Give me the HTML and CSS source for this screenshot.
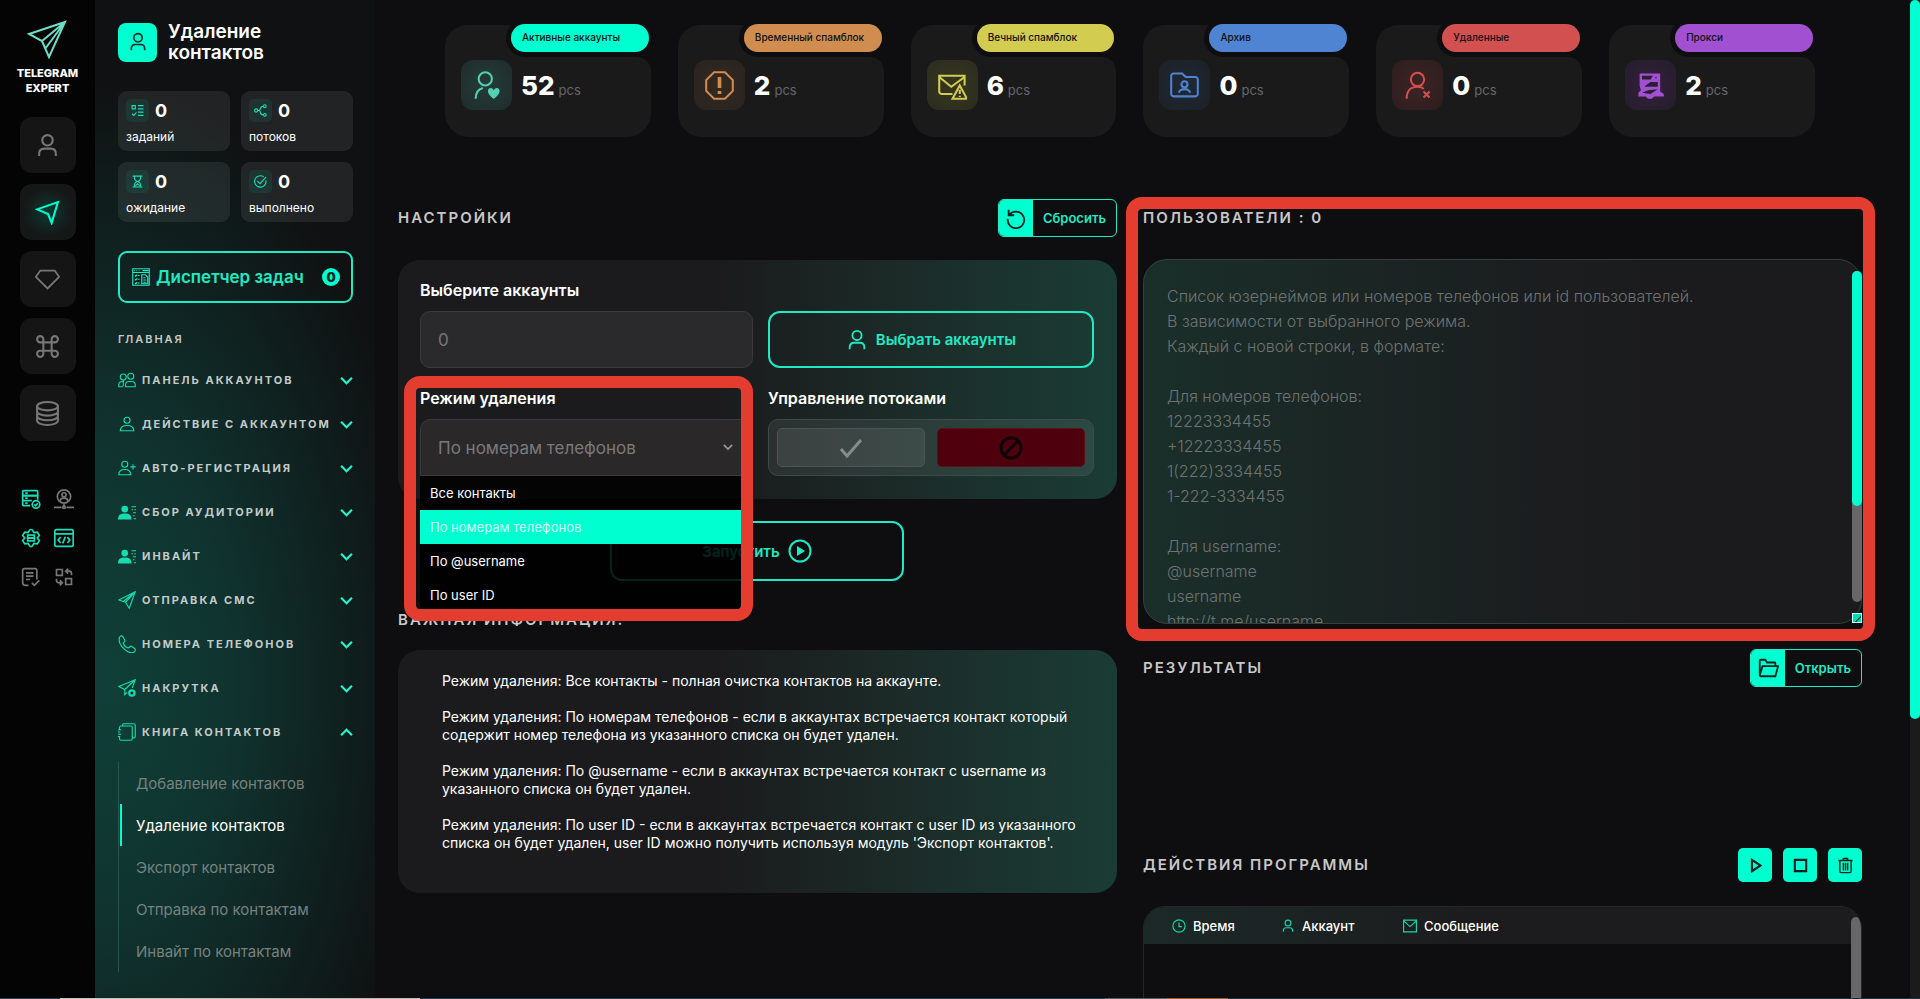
FILE: index.html
```html
<!DOCTYPE html>
<html lang="ru">
<head>
    <meta charset="UTF-8">
    <meta name="viewport" content="width=device-width, initial-scale=1.0">
    <title>Telegram Expert - Удаление контактов</title>
    <link rel="stylesheet" href="styles.css">
</head>
<body>
    <!-- Icon sprite -->
    <svg class="sprite" aria-hidden="true">
        <symbol id="i-user" viewBox="0 0 24 24"><circle cx="12" cy="7" r="5"/><path d="M4 22v-2c0-3 2-5 5-5h6c3 0 5 2 5 5v2"/></symbol>
        <symbol id="i-logo" viewBox="0 0 40 40"><path d="M2 14 38 2 22 37 15 21Z M15 21 38 2 18 29"/></symbol>
        <symbol id="i-nav" viewBox="0 0 24 24"><path d="M2 9 22 2 16 22 12.500 13.500Z"/></symbol>
        <symbol id="i-diamond" viewBox="0 0 28 24"><path d="M6 2h16l5 7-13 13L1 9Z"/></symbol>
        <symbol id="i-command" viewBox="0 0 24 24"><path d="M8 8h8v8H8Z M8 8H5a3 3 0 1 1 3-3Z M16 8V5a3 3 0 1 1 3 3Z M16 16h3a3 3 0 1 1-3 3Z M8 16v3a3 3 0 1 1-3-3Z"/></symbol>
        <symbol id="i-db" viewBox="0 0 24 24"><ellipse cx="12" cy="5" rx="10" ry="4"/><path d="M2 5v14c0 2 4 4 10 4s10-2 10-4V5M2 10c0 2 4 4 10 4s10-2 10-4M2 14.500c0 2 4 4 10 4s10-2 10-4"/></symbol>
        <symbol id="i-server" viewBox="0 0 24 24"><rect x="2" y="2" width="18" height="6" rx="1"/><path d="M11 20H3a1 1 0 0 1-1-1V8h18v5M2 14h11M5 5h3M5 11h3M5 17h3"/><circle cx="18" cy="18.500" r="4.500"/><path d="m16 18.500 1.500 1.500 2.500-3"/></symbol>
        <symbol id="i-netuser" viewBox="0 0 24 24"><circle cx="12" cy="9" r="8"/><circle cx="12" cy="7" r="2.500"/><path d="M7.500 15v-1c0-2 2-3 4.500-3s4.500 1 4.500 3v1M12 18v3M0 22h9M15 22h9"/><circle cx="12" cy="22" r="1.500"/></symbol>
        <symbol id="i-gear" viewBox="0 0 24 24"><path d="M9.500 4c1-3 4-3 5 0l1 1.500 4-.5 2.500 4-2.500 3 2.500 3-2.500 4-4-.5-1 1.500c-1 3-4 3-5 0l-1-1.500-4 .5L2 15l2.500-3L2 9l2.500-4 4 .5Z"/><rect x="8" y="8.500" width="8" height="3.500"/><rect x="8" y="12" width="8" height="3.500"/></symbol>
        <symbol id="i-code" viewBox="0 0 24 24"><rect x="1" y="2" width="22" height="20" rx="2"/><path d="M1 7h22M8 11l-3 3.500L8 18M16 11l3 3.500-3 3.500M13.500 10.500l-3 8"/></symbol>
        <symbol id="i-note" viewBox="0 0 24 24"><path d="M9 22H5c-2 0-3-1-3-3V4c0-1 1-2 2-2h13c1 0 2 1 2 2v11M6 7h9M6 11h9M6 15h5M13 19l3 3 6-6"/></symbol>
        <symbol id="i-swap" viewBox="0 0 24 24"><path d="M3 3h7v7H3ZM14 14h7v7h-7ZM14 5h4c2 0 3 1 3 3v2M17 2l-3 3 3 3M3 14v2c0 2 1 3 3 3h4M7 16l3 3-3 3"/></symbol>
        <symbol id="i-list" viewBox="0 0 24 24"><path d="M2 3h6v6H2ZM2 18l3 3 5-5M13 3h10M13 9h10M13 15h10M13 21h10"/></symbol>
        <symbol id="i-share" viewBox="0 0 24 24"><circle cx="4" cy="12" r="3"/><circle cx="20" cy="4" r="2.500"/><circle cx="20" cy="20" r="2.500"/><path d="M7 12h4M17 4c-8 0-3 8-8 8 5 0 0 8 8 8"/></symbol>
        <symbol id="i-glass" viewBox="0 0 24 24"><path d="M3 2h18M3 22h18M6 2c0 6 1 7 5 10-4 3-5 4-5 10M18 2c0 6-1 7-5 10 4 3 5 4 5 10M8 20l4-4 4 4"/></symbol>
        <symbol id="i-done" viewBox="0 0 24 24"><path d="M22 10a10.500 10.500 0 1 1-4-6.500M6 11l5 5L22 4"/></symbol>
        <symbol id="i-board" viewBox="0 0 24 24"><path d="M1 1h22v22H1ZM1 6h22M3 3.500h1M6 3.500h1M9 3.500h1M14 3.500h8M4 10l1 1 2-2M8 10h2M4 15l1 1 2-2M8 15h2M4 20l1 1 2-2M8 20h2M13 9h5l3 3v9h-8ZM15 13h3M15 16h4M15 19h4"/></symbol>
        <symbol id="i-users" viewBox="0 0 24 24"><circle cx="7" cy="8" r="4"/><circle cx="17" cy="7" r="4"/><path d="M7 21H1v-2c0-3 2-5 5-5h2M10 21v-2c0-3 2-5 5-5h3c3 0 5 2 5 5v2ZM7 12v8"/></symbol>
        <symbol id="i-person" viewBox="0 0 24 24"><circle cx="12" cy="7" r="4"/><path d="M3 21c0-5 3-7 9-7s9 2 9 7Z"/></symbol>
        <symbol id="i-useradd" viewBox="0 0 24 24"><circle cx="9" cy="7" r="4"/><path d="M1 21c0-5 3-7 8-7s8 2 8 7ZM20 7v7M16.500 10.500h7"/></symbol>
        <symbol id="i-userlist" viewBox="0 0 24 24"><g class="solid"><circle cx="9" cy="8" r="4.500"/><path d="M0 22c0-6 3-8 9-8s9 2 9 8Z"/></g><path d="M18 5h6M18 9h2M22 9h2M20 13h4M20 17h2M21 21h3"/></symbol>
        <symbol id="i-plane" viewBox="0 0 24 24"><path d="M1 12 23 1 15 23 10 15ZM10 15 23 1 7 14M10 15l5 8"/></symbol>
        <symbol id="i-planeplus" viewBox="0 0 24 24"><path d="M9 14 1 10 23 1 19 12M9 14 23 1M9 14v7l3-3"/><circle cx="18.500" cy="18.500" r="5" class="solid"/><circle cx="18.500" cy="18.500" r="2" class="hole"/></symbol>
        <symbol id="i-phone" viewBox="0 0 24 24"><path d="M2 3c2-3 4-2 5 0l2 4c1 2-2 3-2 4 1 3 3 5 6 6 2 1 3-3 5-2l4 3c2 1 1 4-1 5-7 3-22-9-19-20Z"/></symbol>
        <symbol id="i-book" viewBox="0 0 24 24"><path d="M4 4h13c1 0 2 1 2 2v15c0 1-1 2-2 2H4c-1 0-2-1-2-2v-3M2 9V6c0-1 1-2 2-2M6 4V3c0-1 1-2 2-2h13c1 0 2 1 2 2v15c0 2-2 2-4 2M0 9h4M0 12h3M0 15h4M0 18h3"/></symbol>
        <symbol id="i-down" viewBox="0 0 12 8"><path d="m1 1.500 5 5 5-5"/></symbol>
        <symbol id="i-heart" viewBox="0 0 24 24"><circle cx="11" cy="6.500" r="5.500"/><path d="M3 23c0-5 2-8 6-9"/><path class="solid" d="M18 23c-7-5-5-9-2.500-9 1.500 0 2 1 2.500 2 .5-1 1-2 2.500-2 2.500 0 4.500 4-2.500 9Z"/></symbol>
        <symbol id="i-warn" viewBox="0 0 24 24"><path d="M7.500 1h9L23 7.500v9L16.500 23h-9L1 16.500v-9Z"/><path class="fat" d="M12 5v9M12 16.500v2.500"/></symbol>
        <symbol id="i-mail" viewBox="0 0 24 24"><path d="M12 19H3c-1 0-2-1-2-2V4h21v8M1 5l10 8L22 5"/><path d="m18 12 6 11H12ZM18 15.500v3.500M18 20.500v1"/></symbol>
        <symbol id="i-folderuser" viewBox="0 0 24 24"><path d="M1 4c0-1 1-2 2-2h7l3 3h8c1 0 2 1 2 2v12c0 1-1 2-2 2H3c-1 0-2-1-2-2Z"/><circle cx="12" cy="11" r="2.500"/><path d="M7.500 18c0-4 9-4 9 0"/></symbol>
        <symbol id="i-userx" viewBox="0 0 24 24"><circle cx="12" cy="7" r="5.500"/><path d="M3 23c0-6 3-10 9-10 2 0 4 0 5 2M17 17l5 5M22 17l-5 5"/></symbol>
        <symbol id="i-proxy" viewBox="0 0 24 24"><path class="solid" d="M3 2h17v15l3 2v2h-8l-2 2h-3l-2-2H2v-3l2-2-1-4Z"/><path class="hole" d="M5 4h9l-2 3H5ZM16 5h1v1h-1ZM8 12l4-3h6v4H7ZM5 18l5-2 8-1-6 4Z"/></symbol>
        <symbol id="i-reset" viewBox="0 0 24 24"><path d="M4 3v6h6M4.500 9a9 9 0 1 1-1.500 4"/></symbol>
        <symbol id="i-folder" viewBox="0 0 24 24"><path d="M3 20V4c0-1 1-1 1-1h5l2 3h8c1 0 1 1 1 1v2M3 20 6 10h17l-3 11H4c-1 0-1-1-1-1Z"/></symbol>
        <symbol id="i-check" viewBox="0 0 24 20"><path d="m2 11 6 7L22 2"/></symbol>
        <symbol id="i-ban" viewBox="0 0 24 24"><circle cx="12" cy="12" r="10"/><path d="M5 19 19 5"/></symbol>
        <symbol id="i-play" viewBox="0 0 24 24"><circle cx="12" cy="12" r="10.500"/><path class="solid" d="m9 7 8 5-8 5Z"/></symbol>
        <symbol id="i-tri" viewBox="0 0 24 24"><path d="m7 4 12 8-12 8Z"/></symbol>
        <symbol id="i-square" viewBox="0 0 24 24"><path d="M4 4h16v16H4Z"/></symbol>
        <symbol id="i-trash" viewBox="0 0 24 24"><path d="M2 5h20M9 5V2h6v3M4 5v15c0 2 1 2 2 2h12c1 0 2 0 2-2V5M9 8v11M12 8v11M15 8v11"/></symbol>
        <symbol id="i-clock" viewBox="0 0 24 24"><circle cx="12" cy="12" r="10.500"/><path d="M12 6v7h5"/></symbol>
        <symbol id="i-letter" viewBox="0 0 24 24"><path d="M1 2h22v20H1ZM2 4l10 9L22 4"/></symbol>
    </svg>

    <div class="app">
        <!-- Left rail -->
        <nav class="rail" aria-label="Разделы">
            <a class="logo" href="#">
                <svg><use href="#i-logo"/></svg>
                <span>TELEGRAM<br>EXPERT</span>
            </a>
            <div class="rail-buttons">
                <button class="rail-btn" aria-label="Аккаунты"><svg><use href="#i-user"/></svg></button>
                <button class="rail-btn active" aria-label="Telegram"><svg><use href="#i-nav"/></svg></button>
                <button class="rail-btn" aria-label="Премиум"><svg><use href="#i-diamond"/></svg></button>
                <button class="rail-btn" aria-label="Команды"><svg><use href="#i-command"/></svg></button>
                <button class="rail-btn" aria-label="База"><svg><use href="#i-db"/></svg></button>
            </div>
            <div class="rail-tools">
                <button class="tool on" aria-label="Серверы"><svg><use href="#i-server"/></svg></button>
                <button class="tool" aria-label="Сеть"><svg><use href="#i-netuser"/></svg></button>
                <button class="tool on" aria-label="Настройки"><svg><use href="#i-gear"/></svg></button>
                <button class="tool on" aria-label="Код"><svg><use href="#i-code"/></svg></button>
                <button class="tool" aria-label="Журнал"><svg><use href="#i-note"/></svg></button>
                <button class="tool" aria-label="Обмен"><svg><use href="#i-swap"/></svg></button>
            </div>
        </nav>

        <!-- Sidebar -->
        <aside class="sidebar">
            <header class="side-head">
                <span class="side-icon"><svg><use href="#i-user"/></svg></span>
                <h1>Удаление<br>контактов</h1>
            </header>
            <div class="counters">
                <div class="counter"><div><svg><use href="#i-list"/></svg><b>0</b></div><span>заданий</span></div>
                <div class="counter"><div><svg><use href="#i-share"/></svg><b>0</b></div><span>потоков</span></div>
                <div class="counter"><div><svg><use href="#i-glass"/></svg><b>0</b></div><span>ожидание</span></div>
                <div class="counter"><div><svg><use href="#i-done"/></svg><b>0</b></div><span>выполнено</span></div>
            </div>
            <button class="task-btn"><svg><use href="#i-board"/></svg><span>Диспетчер задач</span><b>0</b></button>
            <h2>ГЛАВНАЯ</h2>
            <ul class="menu">
                <li><a href="#"><svg><use href="#i-users"/></svg>ПАНЕЛЬ АККАУНТОВ<svg class="chev"><use href="#i-down"/></svg></a></li>
                <li><a href="#"><svg><use href="#i-person"/></svg>ДЕЙСТВИЕ С АККАУНТОМ<svg class="chev"><use href="#i-down"/></svg></a></li>
                <li><a href="#"><svg><use href="#i-useradd"/></svg>АВТО-РЕГИСТРАЦИЯ<svg class="chev"><use href="#i-down"/></svg></a></li>
                <li><a href="#"><svg><use href="#i-userlist"/></svg>СБОР АУДИТОРИИ<svg class="chev"><use href="#i-down"/></svg></a></li>
                <li><a href="#"><svg><use href="#i-userlist"/></svg>ИНВАЙТ<svg class="chev"><use href="#i-down"/></svg></a></li>
                <li><a href="#"><svg><use href="#i-plane"/></svg>ОТПРАВКА СМС<svg class="chev"><use href="#i-down"/></svg></a></li>
                <li><a href="#"><svg><use href="#i-phone"/></svg>НОМЕРА ТЕЛЕФОНОВ<svg class="chev"><use href="#i-down"/></svg></a></li>
                <li><a href="#"><svg><use href="#i-planeplus"/></svg>НАКРУТКА<svg class="chev"><use href="#i-down"/></svg></a></li>
                <li><a href="#"><svg><use href="#i-book"/></svg>КНИГА КОНТАКТОВ<svg class="chev up"><use href="#i-down"/></svg></a></li>
            </ul>
            <ul class="submenu">
                <li><a href="#">Добавление контактов</a></li>
                <li><a href="#" class="current">Удаление контактов</a></li>
                <li><a href="#">Экспорт контактов</a></li>
                <li><a href="#">Отправка по контактам</a></li>
                <li><a href="#">Инвайт по контактам</a></li>
            </ul>
        </aside>

        <main class="main">
            <section class="cards">
                <div class="card mint"><div class="card-top"><i></i><span>Активные аккаунты</span></div><div class="card-body"><div class="card-icon"><svg><use href="#i-heart"/></svg></div><b>52</b><small>pcs</small></div></div>
                <div class="card orange"><div class="card-top"><i></i><span>Временный спамблок</span></div><div class="card-body"><div class="card-icon"><svg><use href="#i-warn"/></svg></div><b>2</b><small>pcs</small></div></div>
                <div class="card yellow"><div class="card-top"><i></i><span>Вечный спамблок</span></div><div class="card-body"><div class="card-icon"><svg><use href="#i-mail"/></svg></div><b>6</b><small>pcs</small></div></div>
                <div class="card blue"><div class="card-top"><i></i><span>Архив</span></div><div class="card-body"><div class="card-icon"><svg><use href="#i-folderuser"/></svg></div><b>0</b><small>pcs</small></div></div>
                <div class="card red"><div class="card-top"><i></i><span>Удаленные</span></div><div class="card-body"><div class="card-icon"><svg><use href="#i-userx"/></svg></div><b>0</b><small>pcs</small></div></div>
                <div class="card purple"><div class="card-top"><i></i><span>Прокси</span></div><div class="card-body"><div class="card-icon"><svg><use href="#i-proxy"/></svg></div><b>2</b><small>pcs</small></div></div>
            </section>

            <div class="columns">
                <section class="col">
                    <div class="title-row">
                        <h2>НАСТРОЙКИ</h2>
                        <button class="split-btn"><span class="split-icon"><svg><use href="#i-reset"/></svg></span><span class="split-text">Сбросить</span></button>
                    </div>
                    <div class="panel settings">
                        <div class="field">
                            <label for="accounts">Выберите аккаунты</label>
                            <input type="text" id="accounts" class="control" placeholder="0">
                        </div>
                        <div class="field end">
                            <button class="outline-btn"><svg><use href="#i-user"/></svg>Выбрать аккаунты</button>
                        </div>
                        <div class="field mode">
                            <label for="mode">Режим удаления</label>
                            <div class="select-wrap">
                                <select id="mode" class="control">
                                    <option>Все контакты</option>
                                    <option selected>По номерам телефонов</option>
                                    <option>По @username</option>
                                    <option>По user ID</option>
                                </select>
                                <svg><use href="#i-down"/></svg>
                            </div>
                            <ul class="options">
                                <li>Все контакты</li>
                                <li class="selected">По номерам телефонов</li>
                                <li>По @username</li>
                                <li>По user ID</li>
                            </ul>
                            <div class="marker"></div>
                        </div>
                        <div class="field">
                            <span class="label">Управление потоками</span>
                            <div class="switch">
                                <button aria-label="Включить"><svg><use href="#i-check"/></svg></button>
                                <button class="off" aria-label="Выключить"><svg><use href="#i-ban"/></svg></button>
                            </div>
                        </div>
                    </div>
                    <button class="outline-btn run">Запустить<svg><use href="#i-play"/></svg></button>
                    <h2 class="info-title">ВАЖНАЯ ИНФОРМАЦИЯ:</h2>
                    <div class="panel info">
                        <p>Режим удаления: Все контакты - полная очистка контактов на аккаунте.</p>
                        <p>Режим удаления: По номерам телефонов - если в аккаунтах встречается контакт который<br>содержит номер телефона из указанного списка он будет удален.</p>
                        <p>Режим удаления: По @username - если в аккаунтах встречается контакт с username из<br>указанного списка он будет удален.</p>
                        <p>Режим удаления: По user ID - если в аккаунтах встречается контакт с user ID из указанного<br>списка он будет удален, user ID можно получить используя модуль 'Экспорт контактов'.</p>
                    </div>
                </section>

                <section class="col">
                    <div class="users">
                        <div class="title-row"><h2><label for="users">ПОЛЬЗОВАТЕЛИ : 0</label></h2></div>
                        <div class="area-wrap">
                            <textarea id="users" placeholder="Список юзернеймов или номеров телефонов или id пользователей.
В зависимости от выбранного режима.
Каждый с новой строки, в формате:

Для номеров телефонов:
12223334455
+12223334455
1(222)3334455
1-222-3334455

Для username:
@username
username
http://t.me/username"></textarea>
                            <div class="area-scroll"><div></div></div>
                            <div class="grip"></div>
                        </div>
                        <div class="marker"></div>
                    </div>
                    <div class="title-row results">
                        <h2>РЕЗУЛЬТАТЫ</h2>
                        <button class="split-btn"><span class="split-icon"><svg><use href="#i-folder"/></svg></span><span class="split-text">Открыть</span></button>
                    </div>
                    <div class="title-row actions">
                        <h2>ДЕЙСТВИЯ ПРОГРАММЫ</h2>
                        <div class="action-btns">
                            <button aria-label="Старт"><svg><use href="#i-tri"/></svg></button>
                            <button aria-label="Стоп"><svg><use href="#i-square"/></svg></button>
                            <button aria-label="Очистить"><svg><use href="#i-trash"/></svg></button>
                        </div>
                    </div>
                    <div class="log">
                        <table>
                            <thead>
                                <tr>
                                    <th><svg><use href="#i-clock"/></svg>Время</th>
                                    <th><svg><use href="#i-user"/></svg>Аккаунт</th>
                                    <th><svg><use href="#i-letter"/></svg>Сообщение</th>
                                </tr>
                            </thead>
                        </table>
                        <div class="log-scroll"></div>
                    </div>
                </section>
            </div>
        </main>
        <div class="page-scroll"><div></div></div>
    </div>
    <div class="bottom-line"></div>
</body>
</html>
```
FILE: styles.css
```css
* {
    box-sizing: border-box;
}
body {
    margin: 0;
    background-color: #0e0d0f;
    color: white;
    font-family: Inter, "Open Sans", sans-serif;
    font-size: 14px;
    overflow: hidden;
}
h1, h2, p, ul {
    margin: 0;
    padding: 0;
}
ul {
    list-style: none;
}
a {
    color: inherit;
    text-decoration: none;
}
button {
    padding: 0;
    border: none;
    background: none;
    color: inherit;
    font-family: inherit;
    cursor: pointer;
}
svg {
    width: 18px;
    height: 18px;
    flex: none;
    fill: none;
    stroke: currentColor;
    stroke-width: 2;
}
.sprite {
    display: none;
}
.solid {
    fill: currentColor;
    stroke: none;
}
.hole {
    fill: #2a1e30;
    stroke: none;
}
.fat {
    stroke-width: 3;
}
.app {
    display: flex;
    height: 100vh;
    overflow: hidden;
}

/* Rail */
.rail {
    width: 95px;
    flex: none;
    padding-top: 20px;
    background-color: #040404;
    display: flex;
    flex-direction: column;
    align-items: center;
}
.logo {
    display: flex;
    flex-direction: column;
    align-items: center;
    text-align: center;
    font-size: 11px;
    line-height: 15px;
    font-weight: 800;
}
.logo svg {
    width: 40px;
    height: 40px;
    margin-bottom: 6px;
    color: #6fdcc8;
}
.rail-buttons {
    margin-top: 21px;
    display: flex;
    flex-direction: column;
    gap: 11px;
}
.rail-btn {
    width: 56px;
    height: 56px;
    border-radius: 12px;
    background-color: #151515;
    color: #777;
    display: flex;
    align-items: center;
    justify-content: center;
}
.rail-btn svg {
    width: 25px;
    height: 25px;
}
.rail-btn.active {
    background: radial-gradient(circle, #0b3b31, #161818 60%);
    color: #00ffd0;
}
.rail-tools {
    margin-top: 48px;
    display: grid;
    grid-template-columns: 20px 20px;
    gap: 19px 13px;
}
.tool {
    height: 20px;
    color: #777;
}
.tool.on {
    color: #19dfb9;
}
.tool svg {
    width: 20px;
    height: 20px;
    display: block;
}

/* Sidebar */
.sidebar {
    width: 280px;
    flex: none;
    padding: 21px 22px 0 23px;
    background: radial-gradient(ellipse 320px 600px at 10px 680px, #0f4038, #10332f 40%, #0f1d1c 80%, #101112);
}
.side-head {
    display: flex;
    align-items: center;
    gap: 11px;
}
.side-head h1 {
    font-size: 19px;
    line-height: 21px;
    font-weight: 600;
}
.side-icon {
    width: 39px;
    height: 39px;
    border-radius: 8px;
    background-color: #00ffd0;
    color: #0b2c26;
    display: flex;
    align-items: center;
    justify-content: center;
}
.side-icon svg {
    width: 20px;
    height: 20px;
}
.counters {
    margin-top: 28px;
    display: grid;
    grid-template-columns: 1fr 1fr;
    gap: 11px;
}
.counter {
    height: 60px;
    padding: 8px;
    border-radius: 9px;
    background-color: rgba(255, 255, 255, 0.08);
    font-size: 12px;
    line-height: 15px;
}
.counter div {
    display: flex;
    align-items: center;
    gap: 6px;
    height: 23px;
    margin-bottom: 7px;
}
.counter svg {
    width: 23px;
    height: 23px;
    padding: 5px;
    border-radius: 5px;
    background-color: rgba(0, 255, 200, 0.08);
    color: #19dfb9;
    overflow: visible;
}
.counter b {
    font-size: 18px;
}
.task-btn {
    width: 100%;
    height: 52px;
    margin-top: 29px;
    padding: 0 11px 0 12px;
    border: 2px solid #1eeac4;
    border-radius: 9px;
    color: #1eeac4;
    font-size: 17px;
    font-weight: 600;
    display: flex;
    align-items: center;
    gap: 6px;
}
.task-btn svg {
    stroke-width: 1.500;
}
.task-btn b {
    width: 18px;
    height: 18px;
    margin-left: auto;
    border-radius: 50%;
    background-color: #00ffd0;
    color: #0b2c26;
    font-size: 13px;
    line-height: 18px;
}
h2 {
    font-size: 15px;
    line-height: 20px;
    font-weight: 600;
    letter-spacing: 2px;
    color: #c8c8c8;
}
.sidebar h2 {
    margin: 26px 0 9px;
    font-size: 11px;
}
.menu a {
    display: flex;
    align-items: center;
    gap: 6px;
    height: 44px;
    font-size: 11px;
    font-weight: 700;
    letter-spacing: 2px;
    white-space: nowrap;
    color: #c3cbca;
}
.menu svg {
    color: #16dcaf;
    stroke-width: 1.500;
}
.menu .hole {
    fill: #103a35;
}
.menu .chev {
    width: 13px;
    height: 9px;
    margin-left: auto;
    stroke-width: 2;
    color: #1ff5cd;
}
.menu .chev.up {
    transform: rotate(180deg);
}
.submenu {
    margin-top: 8px;
    border-left: 1px solid #29544b;
}
.submenu a {
    display: flex;
    align-items: center;
    height: 42px;
    margin-left: 1px;
    padding-left: 14px;
    border-left: 2px solid transparent;
    color: #76827f;
    font-size: 15px;
}
.submenu a.current {
    border-left-color: #00ffd0;
    color: white;
}

/* Main */
.main {
    flex: 1;
    min-width: 0;
    padding: 24px 48px 0 23px;
}
.cards {
    display: grid;
    grid-template-columns: repeat(6, 1fr);
    gap: 27px;
    padding: 0 47px;
}
.card-top {
    display: flex;
    height: 33px;
}
.card-top i {
    width: 80px;
    margin: 1px -14px 0 0;
    border-radius: 22px 0 0 0;
    background-color: #1a1a1b;
}
.card-top span {
    flex: 1;
    height: 28px;
    margin-right: 2px;
    padding-left: 11px;
    border-radius: 14px;
    background-color: currentColor;
    box-shadow: 0 0 0 5px #0e0d0f;
    font-size: 10px;
    line-height: 26px;
    font-weight: 500;
    white-space: nowrap;
}
.card-top span::first-line {
    color: #111;
}
.card-body {
    height: 80px;
    padding: 3px 0 0 16px;
    border-radius: 0 14px 24px 24px;
    background-color: #1a1a1b;
    display: flex;
}
.card-icon {
    width: 51px;
    height: 50px;
    margin-right: 9px;
    border-radius: 12px;
    display: flex;
    align-items: center;
    justify-content: center;
}
.card-icon svg {
    width: 29px;
    height: 29px;
    stroke-width: 1.700;
}
.card b {
    color: white;
    font-size: 26px;
    line-height: 52px;
    font-weight: 800;
}
.card small {
    margin-left: 4px;
    color: #66666a;
    font-size: 13px;
    line-height: 60px;
}
.mint .card-icon { background: radial-gradient(circle, #253c38, #1e2c2a); }
.orange .card-icon { background: radial-gradient(circle, #33291f, #292320); }
.yellow .card-icon { background: radial-gradient(circle, #36361f, #2c2c20); }
.blue .card-icon { background: radial-gradient(circle, #202936, #1d2026); }
.red .card-icon { background: radial-gradient(circle, #3c2323, #2e1e1f); }
.purple .card-icon { background: radial-gradient(circle, #35203e, #241d2a); }
.mint { color: #54cfb2; }
.mint .card-top span { background-color: #00ffd0; }
.orange { color: #d18d50; }
.yellow { color: #d2cc50; }
.blue { color: #4f84d2; }
.red { color: #d25050; }
.purple { color: #a150d2; }

.columns {
    display: grid;
    grid-template-columns: 1fr 1fr;
    gap: 26px;
    margin-top: 62px;
}
.col {
    min-width: 0;
}
.title-row {
    display: flex;
    align-items: center;
    justify-content: space-between;
    height: 38px;
}
.split-btn {
    display: flex;
    height: 38px;
    border: 1px solid #1eeac4;
    border-radius: 6px;
    overflow: hidden;
    font-size: 13px;
    font-weight: 600;
    color: #1eeac4;
}
.split-icon {
    width: 34px;
    height: 100%;
    background-color: #00ffd0;
    color: #08231e;
    display: flex;
    align-items: center;
    justify-content: center;
}
.split-icon svg {
    width: 22px;
    height: 22px;
}
.split-text {
    padding: 0 10px;
    line-height: 36px;
}
.panel {
    border-radius: 22px;
    background: linear-gradient(90deg, #1b1b1d 45%, #1b2b28 70%, #1a3c34);
}
.settings {
    margin-top: 23px;
    padding: 20px 23px 23px 22px;
    display: grid;
    grid-template-columns: 333fr 326fr;
    gap: 20px 15px;
}
.field label, .label {
    display: block;
    margin-bottom: 11px;
    font-size: 16px;
    line-height: 20px;
    font-weight: 600;
}
.field.end {
    display: flex;
    align-items: flex-end;
}
.control {
    display: block;
    width: 100%;
    height: 57px;
    padding: 0 17px;
    border: 1px solid #3a3a3c;
    border-radius: 10px;
    background-color: #2a2a2c;
    color: #7a7a7a;
    font-family: inherit;
    font-size: 17px;
    appearance: none;
    outline: none;
}
.control::placeholder {
    color: #757575;
}
.outline-btn {
    width: 100%;
    height: 57px;
    border: 2px solid #1eeac4;
    border-radius: 12px;
    color: #1eeac4;
    font-size: 15px;
    font-weight: 600;
    display: flex;
    align-items: center;
    justify-content: center;
    gap: 8px;
}
.outline-btn svg {
    width: 22px;
    height: 22px;
}
.mode {
    position: relative;
}
.mode select {
    border-radius: 10px 10px 0 0;
    background-color: #2a2829;
}
.select-wrap {
    position: relative;
}
.select-wrap svg {
    position: absolute;
    right: 20px;
    top: 24px;
    width: 10px;
    height: 8px;
    color: #999;
}
.options {
    position: absolute;
    top: 88px;
    left: 0;
    right: 0;
    z-index: 2;
    height: 138px;
    background-color: rgba(0, 0, 0, 0.85);
}
.options li {
    height: 34px;
    padding-left: 10px;
    font-size: 13px;
    line-height: 34px;
}
.options .selected {
    background-color: #00ffd0;
    color: #d5fff6;
}
.marker {
    position: absolute;
    z-index: 3;
    border: 12px solid #e43d30;
    border-radius: 16px;
    pointer-events: none;
}
.mode .marker {
    inset: -12px 0 -145px -16px;
}
.switch {
    display: grid;
    grid-template-columns: 1fr 1fr;
    gap: 12px;
    height: 57px;
    padding: 8px;
    border: 1px solid #3d4a48;
    border-radius: 10px;
    background-color: rgba(255, 255, 255, 0.08);
}
.switch button {
    border: 1px solid #4b5553;
    border-radius: 5px;
    background-color: rgba(255, 255, 255, 0.08);
    color: #868c8b;
    display: flex;
    align-items: center;
    justify-content: center;
}
.switch svg {
    width: 24px;
    height: 24px;
    stroke-width: 3;
}
.switch .off {
    border-color: #5e101c;
    background-color: #4f000d;
    color: #0d0507;
}
.run {
    width: 294px;
    height: 60px;
    margin: 22px auto 0 212px;
}
.run svg {
    width: 24px;
    height: 24px;
}
.info-title {
    margin: 29px 0 20px;
}
.info {
    padding: 22px 40px 41px 44px;
    font-size: 14px;
    line-height: 18px;
    white-space: nowrap;
}
.info p + p {
    margin-top: 18px;
}

/* Right column */
.users {
    position: relative;
}
.users .marker {
    inset: -2px -13px -17px -17px;
}
.area-wrap {
    position: relative;
    margin-top: 22px;
}
textarea {
    display: block;
    width: 100%;
    height: 365px;
    padding: 24px 23px 0;
    border: 1px solid #34403e;
    border-radius: 24px;
    background: linear-gradient(90deg, #1a2f2a, #1b1f20 50%, #1b1b1d 70%);
    color: #ccc;
    font-family: inherit;
    font-size: 16px;
    line-height: 25px;
    font-weight: 300;
    resize: none;
    outline: none;
    overflow: hidden;
}
textarea::placeholder {
    color: #6d7372;
}
.area-scroll {
    position: absolute;
    top: 12px;
    right: 0;
    width: 10px;
    height: 331px;
    border-radius: 5px;
    background-color: #67676a;
}
.area-scroll div {
    height: 235px;
    border-radius: 5px;
    background-color: #00ffd0;
}
.grip {
    position: absolute;
    right: 0;
    bottom: 1px;
    width: 10px;
    height: 10px;
    border: 1px solid #c5fff3;
    background: linear-gradient(135deg, #00dcb5 60%, #134c42 60%, #134c42 75%, #00dcb5 75%);
}
.results {
    margin-top: 25px;
}
.actions {
    margin-top: 159px;
}
.action-btns {
    display: flex;
    gap: 11px;
}
.action-btns button {
    width: 34px;
    height: 34px;
    border-radius: 5px;
    background-color: #00ffd0;
    color: #08231e;
    display: flex;
    align-items: center;
    justify-content: center;
}
.action-btns svg {
    width: 17px;
    height: 17px;
    stroke-width: 3;
}
.action-btns button:last-child svg {
    stroke-width: 2;
}
.log {
    position: relative;
    height: 240px;
    margin-top: 22px;
    border: 1px solid #252829;
    border-radius: 22px;
    overflow: hidden;
}
table {
    width: 100%;
    border-collapse: collapse;
    background: linear-gradient(90deg, #1b2927, #1c1c1e 45%);
}
th {
    height: 37px;
    padding: 0;
    text-align: left;
    font-size: 13px;
    font-weight: 500;
}
th:first-child {
    width: 137px;
    padding-left: 28px;
}
th:nth-child(2) {
    width: 122px;
}
th svg {
    width: 14px;
    height: 14px;
    margin-right: 7px;
    vertical-align: -2px;
    color: #12d8ac;
}
.log-scroll {
    position: absolute;
    top: 10px;
    right: 0;
    bottom: 0;
    width: 10px;
    border-radius: 5px 5px 0 0;
    background-color: #67676a;
}
.page-scroll {
    width: 10px;
    flex: none;
    background-color: #1b1b1c;
}
.page-scroll div {
    height: 72vh;
    border-radius: 5px;
    background-color: #00ffd0;
}
.bottom-line {
    position: fixed;
    left: 0;
    right: 0;
    bottom: 0;
    height: 1px;
    background: linear-gradient(90deg, #2c3d50 60px, #c8c4b8 60px, #c8b4b4 420px, #1d3c4c 420px, #1d3c4c 1105px, #5a6065 1105px, #5a6065 1167px, #9a5c30 1167px, #9a5c30 1228px, #17343c 1228px);
}
```
